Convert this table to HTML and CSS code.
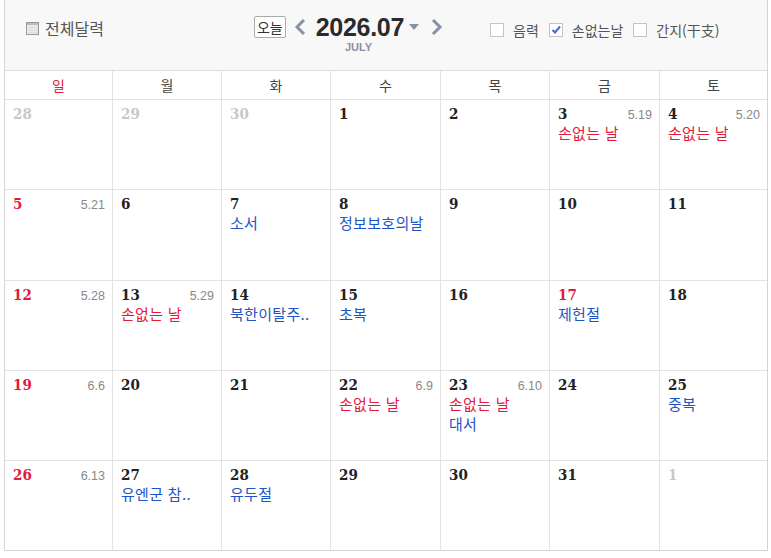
FILE: index.html
```html
<!DOCTYPE html>
<html lang="ko">
<head>
<meta charset="utf-8">
<link rel="stylesheet" href="styles.css">
</head>
<body>
<div class="cal">
  <div class="head">
    <div class="all">
      <svg class="all-ico" width="13" height="13" viewBox="0 0 13 13"><rect x="0.5" y="0.5" width="12" height="12" fill="#f2f2f2" stroke="#999"/><rect x="1" y="1" width="11" height="2" fill="#bbb"/><path d="M1 5.5h11M1 8h11M1 10.5h11M3.5 3v9M6 3v9M8.5 3v9M11 3v9" stroke="#ddd" stroke-width="1"/></svg>
      <span>전체달력</span>
    </div>
    <div class="nav">
      <div class="nav-row">
        <span class="today">오늘</span>
        <svg class="chev" width="12" height="18" viewBox="0 0 12 18"><path d="M10 2L3 9l7 7" fill="none" stroke="#8a8fa8" stroke-width="3"/></svg>
        <span class="ym">2026.07</span>
        <svg class="drop" width="10" height="6" viewBox="0 0 10 6"><path d="M0 0h10L5 6z" fill="#8a8fa8"/></svg>
        <svg class="chev" width="12" height="18" viewBox="0 0 12 18"><path d="M2 2l7 7-7 7" fill="none" stroke="#8a8fa8" stroke-width="3"/></svg>
      </div>
      <div class="month-en">JULY</div>
    </div>
    <div class="opts">
      <label class="opt"><span class="box"></span>음력</label>
      <label class="opt"><span class="box"><svg width="12" height="12" viewBox="0 0 12 12"><path d="M2.5 6l2.5 2.5L10 2.5" fill="none" stroke="#4b63d8" stroke-width="2"/></svg></span>손없는날</label>
      <label class="opt"><span class="box"></span>간지(干支)</label>
    </div>
  </div>
  <div class="grid">
    <div class="wd sun">일</div><div class="wd">월</div><div class="wd">화</div><div class="wd">수</div><div class="wd">목</div><div class="wd">금</div><div class="wd">토</div>

    <div class="cell"><div class="top"><span class="d dim">28</span></div></div>
    <div class="cell"><div class="top"><span class="d dim">29</span></div></div>
    <div class="cell"><div class="top"><span class="d dim">30</span></div></div>
    <div class="cell"><div class="top"><span class="d">1</span></div></div>
    <div class="cell"><div class="top"><span class="d">2</span></div></div>
    <div class="cell"><div class="top"><span class="d">3</span><span class="lu">5.19</span></div><div class="ev red">손없는 날</div></div>
    <div class="cell"><div class="top"><span class="d">4</span><span class="lu">5.20</span></div><div class="ev red">손없는 날</div></div>

    <div class="cell"><div class="top"><span class="d sun">5</span><span class="lu">5.21</span></div></div>
    <div class="cell"><div class="top"><span class="d">6</span></div></div>
    <div class="cell"><div class="top"><span class="d">7</span></div><div class="ev blue">소서</div></div>
    <div class="cell"><div class="top"><span class="d">8</span></div><div class="ev blue">정보보호의날</div></div>
    <div class="cell"><div class="top"><span class="d">9</span></div></div>
    <div class="cell"><div class="top"><span class="d">10</span></div></div>
    <div class="cell"><div class="top"><span class="d">11</span></div></div>

    <div class="cell"><div class="top"><span class="d sun">12</span><span class="lu">5.28</span></div></div>
    <div class="cell"><div class="top"><span class="d">13</span><span class="lu">5.29</span></div><div class="ev red">손없는 날</div></div>
    <div class="cell"><div class="top"><span class="d">14</span></div><div class="ev blue">북한이탈주..</div></div>
    <div class="cell"><div class="top"><span class="d">15</span></div><div class="ev blue">초복</div></div>
    <div class="cell"><div class="top"><span class="d">16</span></div></div>
    <div class="cell"><div class="top"><span class="d sun">17</span></div><div class="ev blue">제헌절</div></div>
    <div class="cell"><div class="top"><span class="d">18</span></div></div>

    <div class="cell"><div class="top"><span class="d sun">19</span><span class="lu">6.6</span></div></div>
    <div class="cell"><div class="top"><span class="d">20</span></div></div>
    <div class="cell"><div class="top"><span class="d">21</span></div></div>
    <div class="cell"><div class="top"><span class="d">22</span><span class="lu">6.9</span></div><div class="ev red">손없는 날</div></div>
    <div class="cell"><div class="top"><span class="d">23</span><span class="lu">6.10</span></div><div class="ev red">손없는 날</div><div class="ev blue">대서</div></div>
    <div class="cell"><div class="top"><span class="d">24</span></div></div>
    <div class="cell"><div class="top"><span class="d">25</span></div><div class="ev blue">중복</div></div>

    <div class="cell"><div class="top"><span class="d sun">26</span><span class="lu">6.13</span></div></div>
    <div class="cell"><div class="top"><span class="d">27</span></div><div class="ev blue">유엔군 참..</div></div>
    <div class="cell"><div class="top"><span class="d">28</span></div><div class="ev blue">유두절</div></div>
    <div class="cell"><div class="top"><span class="d">29</span></div></div>
    <div class="cell"><div class="top"><span class="d">30</span></div></div>
    <div class="cell"><div class="top"><span class="d">31</span></div></div>
    <div class="cell"><div class="top"><span class="d dim">1</span></div></div>
  </div>
</div>
</body>
</html>
```
FILE: styles.css
```css
html, body { margin: 0; padding: 0; background: #fff; }
body { padding: 0 3px 0 4px; font-family: "Noto Sans CJK KR", "Noto Sans", sans-serif; }
.cal {
  width: 762px;
  border: 1px solid #d4d4d4;
  border-top: none;
}
.head {
  height: 70px;
  background: #f8f8f8;
  border-bottom: 1px solid #dddddd;
  display: flex;
  align-items: flex-start;
}
.all {
  display: flex;
  align-items: center;
  gap: 6px;
  margin: 16px 0 0 21px;
  font-size: 16px;
  color: #555;
  width: 226px;
}
.all-ico { flex: none; }
.nav {
  display: flex;
  flex-direction: column;
  align-items: center;
  margin-top: 10px;
  width: 193px;
}
.nav-row { display: flex; align-items: center; height: 34px; }
.today {
  font-size: 14px;
  color: #333;
  border: 1px solid #aaa;
  background: #fff;
  border-radius: 2px;
  padding: 0 2px;
  line-height: 20px;
  margin-right: 8px;
}
.chev { flex: none; }
.ym {
  font-family: "Liberation Sans", Arial, sans-serif;
  font-weight: bold;
  font-size: 25px;
  color: #2a2a2a;
  margin: 0 5px 0 10px;
  letter-spacing: -0.3px;
}
.drop { margin-right: 12px; }
.month-en {
  font-family: "Liberation Sans", Arial, sans-serif;
  font-weight: bold;
  font-size: 11px;
  color: #8a90aa;
  margin-top: -3px;
  margin-left: 20px;
}
.opts {
  display: flex;
  align-items: center;
  margin: 20px 0 0 45px;
  gap: 10px;
}
.opt {
  display: flex;
  align-items: center;
  font-size: 14px;
  color: #555;
  gap: 9px;
}
.box {
  width: 14px; height: 14px;
  border: 1px solid #c4c4c4;
  background: #fff;
  display: flex; align-items: center; justify-content: center;
  box-sizing: border-box;
}
.box svg { flex: none; }
.grid {
  display: grid;
  grid-template-columns: 107px 109px 109px 110px 109px 110px 108px;
  grid-template-rows: 29px 90px 91px 90px 90px 89px;
}
.wd {
  text-align: center;
  font-size: 14px;
  line-height: 28px;
  color: #444;
  border-left: 1px solid #e3e3e3;
  border-bottom: 1px solid #e3e3e3;
}
.wd:nth-child(7n+1), .cell:nth-child(7n+1) { border-left: none; }
.wd.sun { color: #e31a3c; }
.cell {
  border-left: 1px solid #e3e3e3;
  border-bottom: 1px solid #e3e3e3;
  padding: 5px 7px 0 8px;
  box-sizing: border-box;
  min-width: 0;
}
.grid .cell:nth-last-child(-n+7) { border-bottom: none; }
.top { display: flex; justify-content: space-between; align-items: baseline; height: 18px; }
.d {
  font-family: "DejaVu Serif Condensed", "DejaVu Serif", serif;
  font-stretch: condensed;
  font-weight: bold;
  font-size: 15px;
  color: #222;
}
.d.sun { color: #e31a3c; }
.d.dim { color: #c8c8c8; }
.lu {
  font-family: "Liberation Sans", Arial, sans-serif;
  font-size: 12.5px;
  color: #888;
}
.ev {
  font-size: 15px;
  line-height: 20px;
  letter-spacing: 0.3px;
  white-space: nowrap;
}
.ev.red { color: #e31a3c; }
.ev.blue { color: #1c55c8; }
```
